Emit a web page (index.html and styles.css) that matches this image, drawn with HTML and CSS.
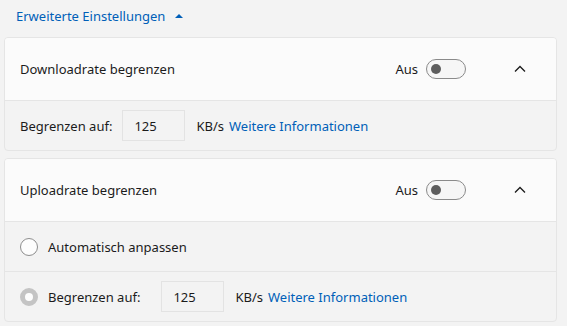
FILE: index.html
```html
<!DOCTYPE html>
<html lang="de">
<head>
<meta charset="utf-8">
<link rel="stylesheet" href="styles.css">
</head>
<body>
<div class="adv">
  <span class="adv-link">Erweiterte Einstellungen</span>
  <span class="caret"></span>
</div>

<div class="card">
  <div class="head">
    <span class="title">Downloadrate begrenzen</span>
    <span class="state">Aus</span>
    <span class="toggle"><span class="knob"></span></span>
    <svg class="chev" width="12" height="8" viewBox="0 0 12 8"><path d="M1 6.5 L6 1.5 L11 6.5" fill="none" stroke="#1b1b1b" stroke-width="1.3"/></svg>
  </div>
  <div class="row">
    <span class="label">Begrenzen auf:</span>
    <span class="input">125</span>
    <span class="unit">KB/s</span>
    <span class="link">Weitere Informationen</span>
  </div>
</div>

<div class="card second">
  <div class="head">
    <span class="title">Uploadrate begrenzen</span>
    <span class="state">Aus</span>
    <span class="toggle"><span class="knob"></span></span>
    <svg class="chev" width="12" height="8" viewBox="0 0 12 8"><path d="M1 6.5 L6 1.5 L11 6.5" fill="none" stroke="#1b1b1b" stroke-width="1.3"/></svg>
  </div>
  <div class="row radio-row">
    <span class="radio"></span>
    <span class="label">Automatisch anpassen</span>
  </div>
  <div class="row radio-row split">
    <span class="radio disabled"></span>
    <span class="label">Begrenzen auf:</span>
    <span class="input">125</span>
    <span class="unit">KB/s</span>
    <span class="link">Weitere Informationen</span>
  </div>
</div>
</body>
</html>
```

FILE: styles.css
```css
html, body {
  margin: 0;
  padding: 0;
}
body {
  background: #f3f3f3;
  font-family: "Noto Sans", "Open Sans", sans-serif;
  font-size: 13px;
  color: #1b1b1b;
  width: 567px;
  height: 326px;
  overflow: hidden;
}
.adv {
  display: flex;
  align-items: center;
  height: 32px;
  padding-left: 16px;
  margin-bottom: 5px;
}
.adv-link {
  color: #005fb8;
}
.caret {
  width: 0;
  height: 0;
  border-left: 4px solid transparent;
  border-right: 4px solid transparent;
  border-bottom: 4px solid #005fb8;
  margin-left: 10px;
  margin-top: -1px;
}
.card {
  margin: 0 10px 0 4px;
  border: 1px solid #e5e5e5;
  border-radius: 4px;
  background: #f3f3f3;
  overflow: hidden;
}
.card.second {
  margin-top: 7px;
}
.head {
  display: flex;
  align-items: center;
  height: 62px;
  background: #fbfbfb;
  border-bottom: 1px solid #e5e5e5;
  padding-left: 15px;
}
.title {
  flex: 1;
}
.state {
  margin-right: 8px;
}
.toggle {
  box-sizing: border-box;
  width: 40px;
  height: 20px;
  border: 1px solid #8a8a8a;
  border-radius: 10px;
  background: #f6f6f6;
  display: flex;
  align-items: center;
  padding-left: 4px;
}
.knob {
  width: 10px;
  height: 10px;
  border-radius: 50%;
  background: #5d5d5d;
}
.chev {
  margin-left: 48px;
  margin-right: 30px;
}
.row {
  display: flex;
  align-items: center;
  height: 49px;
  padding-left: 15px;
}
.label {
  margin-right: 10px;
}
.input {
  box-sizing: border-box;
  width: 63px;
  height: 31px;
  border: 1px solid #e3e3e3;
  background: #f3f3f3;
  padding: 0 0 0 11px;
  display: flex;
  align-items: center;
  margin-right: 11px;
}
.unit {
  margin-right: 5px;
}
.link {
  color: #005fb8;
}
.radio-row .label {
  margin-left: 10px;
}
.split .label {
  margin-right: 21px;
}
.radio-row .label:last-child {
  margin-right: 0;
}
.radio {
  box-sizing: border-box;
  width: 18px;
  height: 18px;
  border-radius: 50%;
  border: 1px solid #8d8d8d;
  background: #fdfdfd;
  flex: none;
}
.radio.disabled {
  border: 5px solid #c4c4c4;
  background: #fdfdfd;
}
.split {
  border-top: 1px solid #e5e5e5;
  height: 49px;
}
```
